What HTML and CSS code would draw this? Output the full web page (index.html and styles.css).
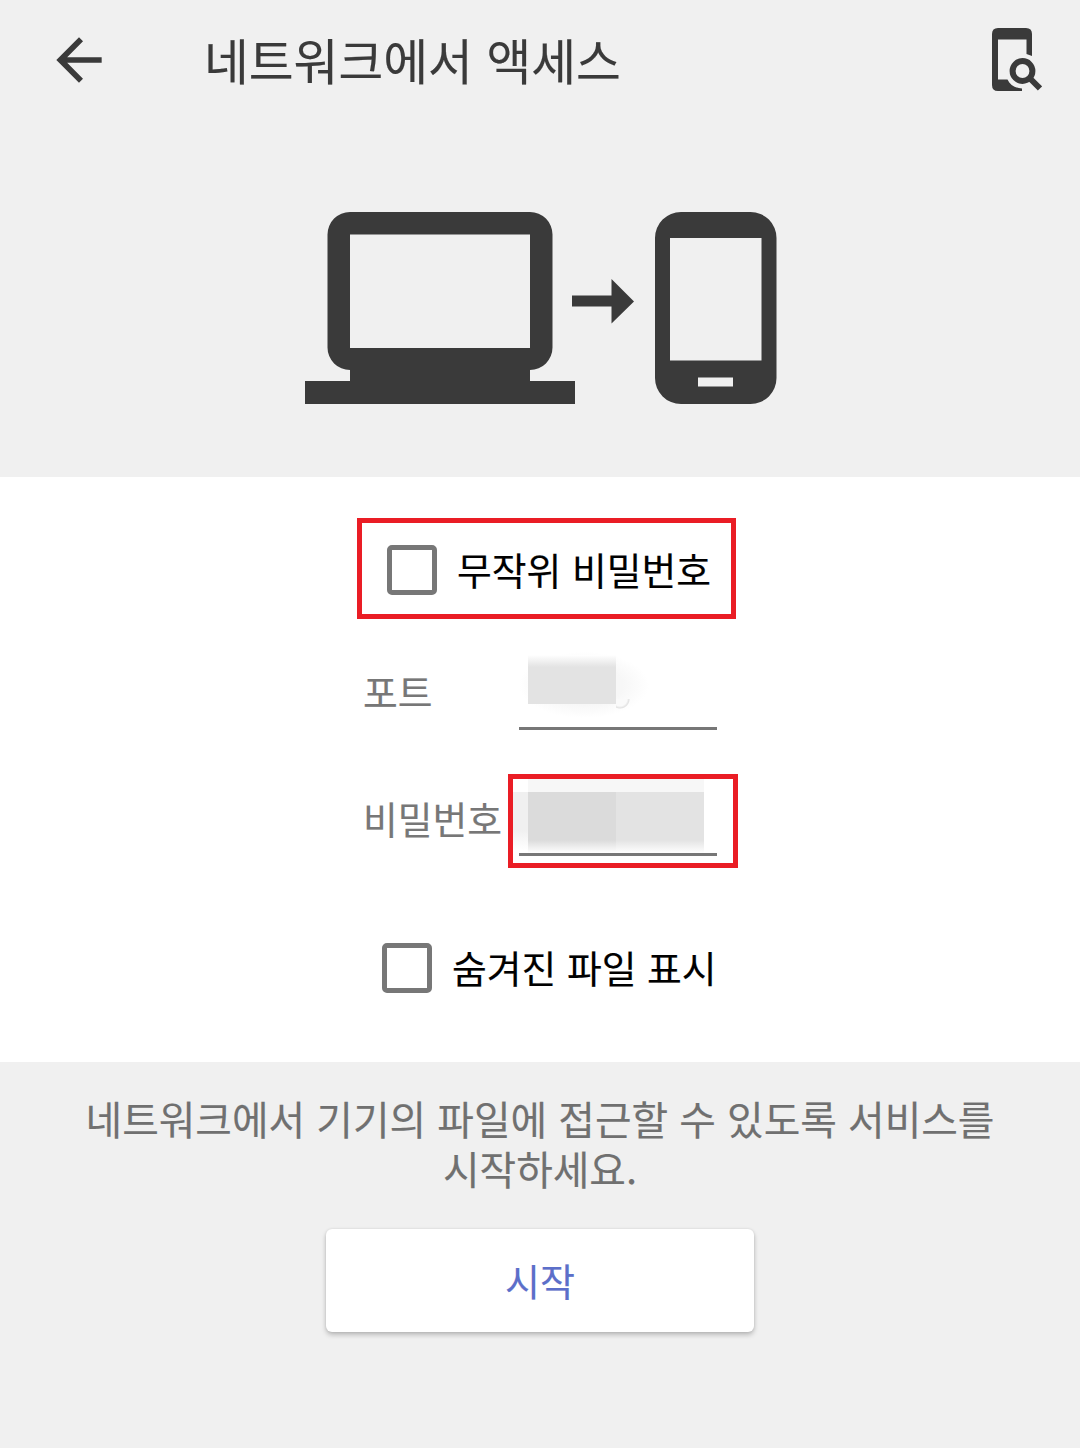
FILE: index.html
```html
<!DOCTYPE html>
<html lang="ko">
<head>
    <meta charset="UTF-8">
    <meta name="viewport" content="width=device-width, initial-scale=1.0">
    <title>네트워크에서 액세스</title>
    <link rel="stylesheet" href="styles.css">
</head>
<body>
    <header class="toolbar">
        <svg class="back" viewBox="0 0 24 24"><path d="M20 11H7.830l5.590-5.590L12 4l-8 8 8 8 1.410-1.410L7.830 13H20v-2z"/></svg>
        <h1>네트워크에서 액세스</h1>
        <svg class="find" viewBox="0 0 50 63">
            <path fill-rule="evenodd" d="M6 0H34Q40 0 40 6V28L34.500 26V11.500H6V51.500H15.500C18 57 23 60 30 60.500V63H6Q0 63 0 57V6Q0 0 6 0Z"/>
            <circle cx="30.500" cy="43" r="9.900"/>
            <path class="handle" d="M37.500 50L48 60.500"/>
        </svg>
    </header>

    <div class="hero">
        <svg viewBox="0 0 472 192">
            <path fill-rule="evenodd" d="M45 0H225A22.500 22.500 0 0 1 247.500 22.500V135.500A22.500 22.500 0 0 1 225 158V169H270V192H0V169H45V158A22.500 22.500 0 0 1 22.500 135.500V22.500A22.500 22.500 0 0 1 45 0ZM45 22.500V136H225V22.500Z"/>
            <path d="M267 83.500H306.500V67L329 89.500 306.500 111.500V94.500H267Z"/>
            <path fill-rule="evenodd" d="M376 0H445.500A26 26 0 0 1 471.500 26V166A26 26 0 0 1 445.500 192H376A26 26 0 0 1 350 166V26A26 26 0 0 1 376 0ZM365 26V148.500H456.500V26ZM393 165.500V174.500H428V165.500Z"/>
        </svg>
    </div>

    <div class="settings">
        <label class="check marked">
            <input type="checkbox">
            <span>무작위 비밀번호</span>
        </label>
        <div class="row">
            <span class="name port-name">포트</span>
            <div class="field port">
                <div class="hidden-value"></div>
            </div>
        </div>
        <div class="row">
            <span class="name">비밀번호</span>
            <div class="field password marked">
                <div class="hidden-value"></div>
            </div>
        </div>
        <label class="check files">
            <input type="checkbox">
            <span>숨겨진 파일 표시</span>
        </label>
    </div>

    <div class="service">
        <p>네트워크에서 기기의 파일에 접근할 수 있도록 서비스를<br>시작하세요.</p>
        <button>시작</button>
    </div>
</body>
</html>
```
FILE: styles.css
```css
* {
    box-sizing: border-box;
}

body {
    margin: 0;
    min-height: 1448px;
    background-color: #f0f0f0;
    color: #000;
    font-family: "Noto Sans CJK KR", sans-serif;
    font-size: 37.8px;
    -webkit-text-stroke: 0.15px;
}

svg {
    display: block;
    fill: #3a3a3a;
}

.toolbar {
    display: flex;
    align-items: center;
    height: 120px;
    padding: 0 38px 0 45px;
}

.toolbar h1 {
    flex: 1;
    margin: 0 0 3px 91px;
    color: #3a3a3a;
    font-size: 48.7px;
    font-weight: 400;
    line-height: 70px;
}

.back {
    width: 68px;
    height: 68px;
}

.find {
    width: 50px;
    height: 63px;
    margin-bottom: 2px;
}

.find circle,
.find .handle {
    fill: none;
    stroke: #3a3a3a;
    stroke-width: 6;
}

.hero {
    height: 357px;
    padding: 92px 0 0 305px;
}

.hero svg {
    width: 472px;
    height: 192px;
}

.settings {
    height: 585px;
    padding: 41px 0 0 357px;
    background-color: #fff;
}

.marked {
    border: 5px solid #ea1d25;
}

.check {
    display: flex;
    align-items: center;
    gap: 20px;
    width: 379px;
    height: 101px;
    padding-left: 25px;
    white-space: nowrap;
}

.check input {
    appearance: none;
    flex: none;
    width: 50px;
    height: 50px;
    margin: 2px 0 0;
    border: 5px solid #777;
    border-radius: 5px;
}

.check span {
    line-height: 50px;
}

.files {
    margin-top: 48px;
}

.row {
    display: flex;
    align-items: flex-start;
    padding-left: 6px;
}

.name {
    width: 145px;
    padding-top: 19px;
    color: #777;
    line-height: 50px;
    white-space: nowrap;
}

.port-name {
    padding-top: 47px;
}

.field {
    width: 230px;
    height: 94px;
}

.hidden-value {
    width: 198px;
    border-bottom: 3px solid #777;
}

.port {
    margin: 30px 0 31px;
    padding: 0 11px;
}

/* values are covered with a smudge */
.port .hidden-value {
    height: 81px;
    background:
        linear-gradient(#fff, #e3e3e3 12px) 9px 6px / 88px 49px no-repeat,
        radial-gradient(circle at 4px 0, #fafafa 7px, #e2e2e2 9px, transparent 10px) 97px 50px / 16px 12px no-repeat,
        radial-gradient(closest-side, #f7f7f7 60%, #fff) 0 3px / 130px 66px no-repeat;
}

.password {
    padding: 0 1px;
}

.password .hidden-value {
    width: 203px;
    height: 77px;
    margin-left: -1px;
    border: 0;
    background:
        linear-gradient(#777, #777) 6px 74px / 198px 3px no-repeat,
        linear-gradient(#dbdbdb 48px, #fff 61px) 15px 13px / 88px 61px no-repeat,
        linear-gradient(#e3e3e3 48px, #fff 61px) 103px 13px / 88px 61px no-repeat,
        linear-gradient(#f0f0f0 38px, #fff 58px) 0 13px / 15px 61px no-repeat,
        linear-gradient(#f7f7f7, #f7f7f7) 15px 0 / 176px 13px no-repeat;
    width: 204px;
}

.service {
    display: flex;
    flex-direction: column;
    align-items: center;
    padding-top: 31px;
    color: #707070;
    font-size: 39.8px;
}

.service p {
    margin: 0 0 36px;
    line-height: 50px;
    text-align: center;
    white-space: nowrap;
}

.service button {
    width: 428px;
    height: 103px;
    padding: 0 0 3px;
    border: 0;
    border-radius: 6px;
    background-color: #fff;
    box-shadow: 0 3px 5px rgba(0, 0, 0, 0.22), 0 0 3px rgba(0, 0, 0, 0.1);
    color: #5c6fc9;
    font-family: inherit;
    font-size: 38px;
}
```
